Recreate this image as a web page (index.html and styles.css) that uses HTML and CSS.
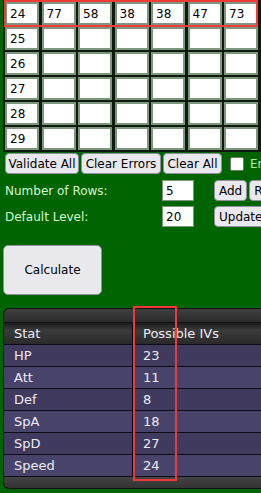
FILE: index.html
```html
<!DOCTYPE html>
<html>
<head>
    <title>IV Calculator</title>
    <link rel="stylesheet" href="styles.css">
</head>
<body>
    <div class="page">
        <div class="iv-grid">
            <input class="cell" value="24"><input class="cell" value="77"><input class="cell" value="58"><input class="cell" value="38"><input class="cell" value="38"><input class="cell" value="47"><input class="cell" value="73"><input class="cell side">
            <input class="cell" value="25"><input class="cell"><input class="cell"><input class="cell"><input class="cell"><input class="cell"><input class="cell"><input class="cell side">
            <input class="cell" value="26"><input class="cell"><input class="cell"><input class="cell"><input class="cell"><input class="cell"><input class="cell"><input class="cell side">
            <input class="cell" value="27"><input class="cell"><input class="cell"><input class="cell"><input class="cell"><input class="cell"><input class="cell"><input class="cell side">
            <input class="cell" value="28"><input class="cell"><input class="cell"><input class="cell"><input class="cell"><input class="cell"><input class="cell"><input class="cell side">
            <input class="cell" value="29"><input class="cell"><input class="cell"><input class="cell"><input class="cell"><input class="cell"><input class="cell"><input class="cell side">
        </div>

        <div class="actions">
            <button class="btn btn-validate">Validate All</button>
            <button class="btn btn-errors">Clear Errors</button>
            <button class="btn btn-clear">Clear All</button>
            <label class="check"><span class="box"></span>Enable auto-validate</label>
        </div>

        <div class="settings">
            <span class="label">Number of Rows:</span>
            <input class="small-input" value="5">
            <div class="btn-group"><button class="btn">Add</button><button class="btn">Remove</button></div>
            <span class="label">Default Level:</span>
            <input class="small-input" value="20">
            <div class="btn-group"><button class="btn">Update</button></div>
        </div>

        <button class="calc-btn">Calculate</button>

        <div class="results">
            <div class="results-top"></div>
            <div class="row head"><span>Stat</span><span>Possible IVs</span></div>
            <div class="row"><span>HP</span><span>23</span></div>
            <div class="row alt"><span>Att</span><span>11</span></div>
            <div class="row"><span>Def</span><span>8</span></div>
            <div class="row alt"><span>SpA</span><span>18</span></div>
            <div class="row"><span>SpD</span><span>27</span></div>
            <div class="row alt"><span>Speed</span><span>24</span></div>
            <div class="results-bottom"></div>
        </div>

        <!-- highlight boxes -->
        <div class="mark mark-row"></div>
        <div class="mark mark-col"></div>
    </div>
</body>
</html>
```

FILE: styles.css
```css
body {
    margin: 0;
    padding: 0;
    background: #006400;
    font-family: "DejaVu Sans", Verdana, sans-serif;
    font-size: 12px;
    overflow: hidden;
}

.page {
    position: relative;
    width: 420px;
}

.iv-grid {
    display: grid;
    grid-template-columns: repeat(8, 34px);
    column-gap: 2.5px;
    row-gap: 2px;
    padding: 2px;
    margin-left: 3px;
    width: max-content;
    background: #0e1a0e;
}

.cell {
    box-sizing: border-box;
    width: 34px;
    height: 23px;
    border: 2px solid #7d967d;
    background: #fff;
    font-family: "DejaVu Sans", Verdana, sans-serif;
    font-size: 12px;
    color: #000;
    padding: 0 0 0 3px;
    outline: none;
}

.cell.side {
    background: #cfcfcf;
}

.actions {
    display: flex;
    align-items: center;
    gap: 2px;
    margin: 1px 0 0 5px;
    white-space: nowrap;
}

.btn {
    font-family: "DejaVu Sans", Verdana, sans-serif;
    font-size: 12px;
    color: #000;
    background: #e9e9ed;
    border: 1px solid #8f8f9d;
    border-radius: 4px;
    height: 21px;
    padding: 0 4px;
    white-space: nowrap;
}

.btn-validate {
    width: 74px;
    padding: 0;
}

.btn-errors {
    width: 80px;
    padding: 0;
}

.btn-clear {
    width: 59px;
    padding: 0;
}

.check {
    display: flex;
    align-items: center;
    color: #a8f0a0;
    margin-left: 6px;
}

.check .box {
    width: 12px;
    height: 12px;
    background: #fff;
    border: 1px solid #767676;
    border-radius: 2px;
    margin-right: 6px;
}

.settings {
    display: grid;
    grid-template-columns: 157px 32px max-content;
    row-gap: 5px;
    align-items: center;
    margin: 6px 0 0 5px;
}

.label {
    color: #d8f5d0;
}

.small-input {
    box-sizing: border-box;
    width: 32px;
    height: 21px;
    border: 1px solid #7d967d;
    background: #fff;
    font-family: "DejaVu Sans", Verdana, sans-serif;
    font-size: 12px;
    padding: 0 0 0 3px;
}

.btn-group {
    display: flex;
    gap: 2px;
    margin-left: 20px;
}

.calc-btn {
    display: block;
    margin: 18px 0 0 3px;
    width: 99px;
    height: 50px;
    background: #e9e9ed;
    border: 1px solid #8f8f9d;
    border-radius: 5px;
    font-family: "DejaVu Sans", Verdana, sans-serif;
    font-size: 12px;
    color: #000;
}

.results {
    margin: 13px 0 0 3px;
    width: 400px;
    border: 1px solid #111;
    border-radius: 6px;
    overflow: hidden;
    background: #000;
    color: #ecebf5;
    font-size: 13px;
}

.results-top {
    height: 13px;
    background: linear-gradient(#3e3e3e, #2c2c2c);
    border-bottom: 1px solid #111;
}

.results-bottom {
    height: 11px;
    background: linear-gradient(#444, #333);
}

.row {
    display: grid;
    grid-template-columns: 129px 1fr;
    height: 21px;
    border-bottom: 1px solid #0c0c14;
    background: #3f3a5e;
}

.row.alt {
    background: #48436b;
}

.row span {
    line-height: 21px;
    padding-left: 10px;
}

.row span:first-child {
    border-right: 1px solid #0c0c14;
}

.row.head {
    background: linear-gradient(#1c1c1c, #3a3a3a 35%, #2a2a2a);
}

.mark {
    position: absolute;
    border: 2px solid #f03a3a;
}

.mark-row {
    left: 4px;
    top: 0;
    width: 250px;
    height: 23px;
}

.mark-col {
    left: 133px;
    top: 306px;
    width: 40px;
    height: 171px;
}
```
